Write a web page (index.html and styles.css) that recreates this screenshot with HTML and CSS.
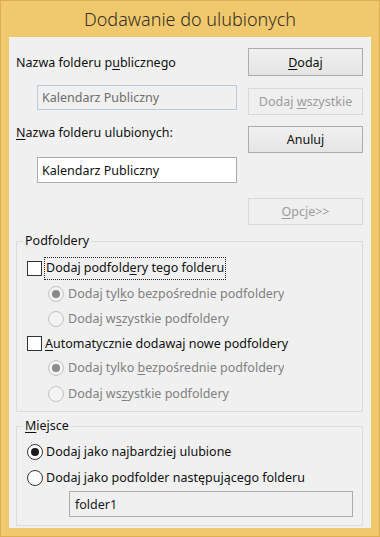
FILE: index.html
```html
<!DOCTYPE html>
<html lang="pl">
<head>
<meta charset="utf-8">
<title>Dodawanie do ulubionych</title>
<link rel="stylesheet" href="styles.css">
</head>
<body>
<div class="window">
  <div class="titlebar"><span>Dodawanie do ulubionych</span></div>
  <div class="client">
    <div class="top">
      <div class="left">
        <div class="label l1">Nazwa folderu p<u>u</u>blicznego</div>
        <div class="textbox tb-disabled tb1"><span>Kalendarz Publiczny</span></div>
        <div class="label l2"><u>N</u>azwa folderu ulubionych:</div>
        <div class="textbox tb2"><span>Kalendarz Publiczny</span></div>
      </div>
      <div class="right">
        <div class="btn b-add"><span><u>D</u>odaj</span></div>
        <div class="btn btn-disabled b-all"><span>Dodaj <u>w</u>szystkie</span></div>
        <div class="btn b-cancel"><span>Anuluj</span></div>
        <div class="btn btn-disabled b-opt"><span><u>O</u>pcje&gt;&gt;</span></div>
      </div>
    </div>

    <fieldset class="group g-sub">
      <legend>Podfoldery</legend>
      <div class="rows rows-sub">
        <div class="row r-cb1">
          <span class="checkbox"></span>
          <span class="txt focus">Dodaj podfold<u>e</u>ry tego folderu</span>
        </div>
        <div class="row sub r-h25">
          <span class="radio radio-dis checked"></span>
          <span class="txt dis clip">Dodaj tyl<u>k</u>o bezpośrednie podfoldery</span>
        </div>
        <div class="row sub r-h26">
          <span class="radio radio-dis"></span>
          <span class="txt dis clip">Dodaj w<u>s</u>zystkie podfoldery</span>
        </div>
        <div class="row r-cb2">
          <span class="checkbox"></span>
          <span class="txt"><u>A</u>utomatycznie dodawaj nowe podfoldery</span>
        </div>
        <div class="row sub r-h26">
          <span class="radio radio-dis checked"></span>
          <span class="txt dis clip">Dodaj tylko <u>b</u>ezpośrednie podfoldery</span>
        </div>
        <div class="row sub r-h25">
          <span class="radio radio-dis"></span>
          <span class="txt dis clip">Dodaj ws<u>z</u>ystkie podfoldery</span>
        </div>
      </div>
    </fieldset>

    <fieldset class="group g-place">
      <legend><u>M</u>iejsce</legend>
      <div class="rows rows-place">
        <div class="row r-h26">
          <span class="radio checked"></span>
          <span class="txt">Dodaj jako najbardziej ulubione</span>
        </div>
        <div class="row r-h26">
          <span class="radio"></span>
          <span class="txt">Dodaj jako podfolder następującego folderu</span>
        </div>
        <div class="textbox tb3"><span>folder1</span></div>
      </div>
    </fieldset>
  </div>
</div>
</body>
</html>
```

FILE: styles.css
```css
* { box-sizing: border-box; }

html, body {
  margin: 0;
  padding: 0;
  background: #f0c96e;
}

body {
  width: 380px;
  height: 537px;
  font-family: "Noto Sans", "Open Sans", "DejaVu Sans", sans-serif;
  font-size: 12.5px;
  color: #1a1a1a;
}

u { text-decoration: underline; text-underline-offset: 2px; text-decoration-thickness: 1px; }

.window {
  width: 380px;
  height: 537px;
  background: #f0c96e;
  border: 1px solid #dcae4f;
  padding: 0 8px 8px 8px;
  display: flex;
  flex-direction: column;
}

.titlebar {
  height: 36px;
  flex: none;
  display: flex;
  align-items: center;
  justify-content: center;
  font-size: 18px;
  font-weight: 300;
  color: #35301f;
}

.client {
  flex: 1;
  background: #f0f0f0;
  padding: 0 8px 0 7px;
  display: flex;
  flex-direction: column;
}

/* ---------- top area ---------- */
.top {
  display: flex;
  gap: 11px;
}

.left {
  width: 221px;
  display: flex;
  flex-direction: column;
}

.right {
  width: 115px;
  display: flex;
  flex-direction: column;
}

.label {
  height: 16px;
  line-height: 16px;
  white-space: nowrap;
  color: #111;
}
.l1 { margin-top: 18px; }
.l2 { margin-top: 15px; }

.textbox {
  margin-left: 21px;
  width: 200px;
  border: 1px solid #abadb3;
  background: #fff;
  padding: 0 4px;
  display: flex;
  align-items: center;
  white-space: nowrap;
  color: #111;
}
.tb-disabled {
  background: #f0f0f0;
  border-color: #bccbd9;
  color: #6d6d6d;
}
.tb1 { margin-top: 14px; height: 25px; }
.tb2 { margin-top: 16px; height: 26px; }

.btn {
  height: 27px;
  border: 1px solid #acacac;
  background: linear-gradient(#f0f0f0, #e5e5e5);
  display: flex;
  align-items: center;
  justify-content: center;
  white-space: nowrap;
  color: #111;
}
.btn-disabled {
  background: #efefef;
  border-color: #d9d9d9;
  color: #9c9c9c;
}
.b-add { margin-top: 11px; height: 28px; }
.b-all { margin-top: 12px; }
.b-cancel { margin-top: 11px; }
.b-opt { margin-top: 45px; }

/* ---------- group boxes ---------- */
.group {
  margin: 0;
  padding: 0;
  border: 1px solid #dcdcdc;
  min-width: 0;
}
.group legend {
  margin-left: 6px;
  padding: 0 2px;
  line-height: 16px;
  height: 16px;
  color: #111;
}
.g-sub { margin-top: 8px; }
.g-place { margin-top: 6px; }

.rows {
  display: flex;
  flex-direction: column;
}
.rows-sub { padding: 6px 0 5px 10px; }
.rows-place { padding: 5px 0 8px 10px; }

.row {
  display: flex;
  align-items: center;
  white-space: nowrap;
}
.row.sub { padding-left: 21px; }
.r-cb1 { height: 26px; }
.r-cb2 { height: 23px; }
.r-h25 { height: 25px; }
.r-h26 { height: 26px; }

.checkbox {
  flex: none;
  width: 15px;
  height: 15px;
  border: 1px solid #333;
  background: #fff;
}

.radio {
  flex: none;
  width: 16px;
  height: 16px;
  border: 1px solid #333;
  border-radius: 50%;
  background: #fff;
  display: flex;
  align-items: center;
  justify-content: center;
}
.radio.checked::after {
  content: "";
  width: 8px;
  height: 8px;
  border-radius: 50%;
  background: #1a1a1a;
}
.radio-dis {
  border-color: #c2c2c2;
  background: #f3f3f3;
}
.radio-dis.checked::after {
  background: #8a8a8a;
}

.txt {
  margin-left: 3px;
  line-height: 16px;
  color: #111;
}
.row.sub .txt { margin-left: 4px; }
.txt.dis { color: #808080; }
.txt.clip {
  width: 216px;
  overflow: hidden;
}
.txt.focus {
  padding: 2px 1px 3px 1px;
  outline: 1px dotted #222;
}

.tb3 {
  margin-left: 42px;
  width: 284px;
  height: 26px;
  background: #f0f0f0;
  border-color: #acacac;
  padding: 0 5px;
  color: #1a1a1a;
}
```
